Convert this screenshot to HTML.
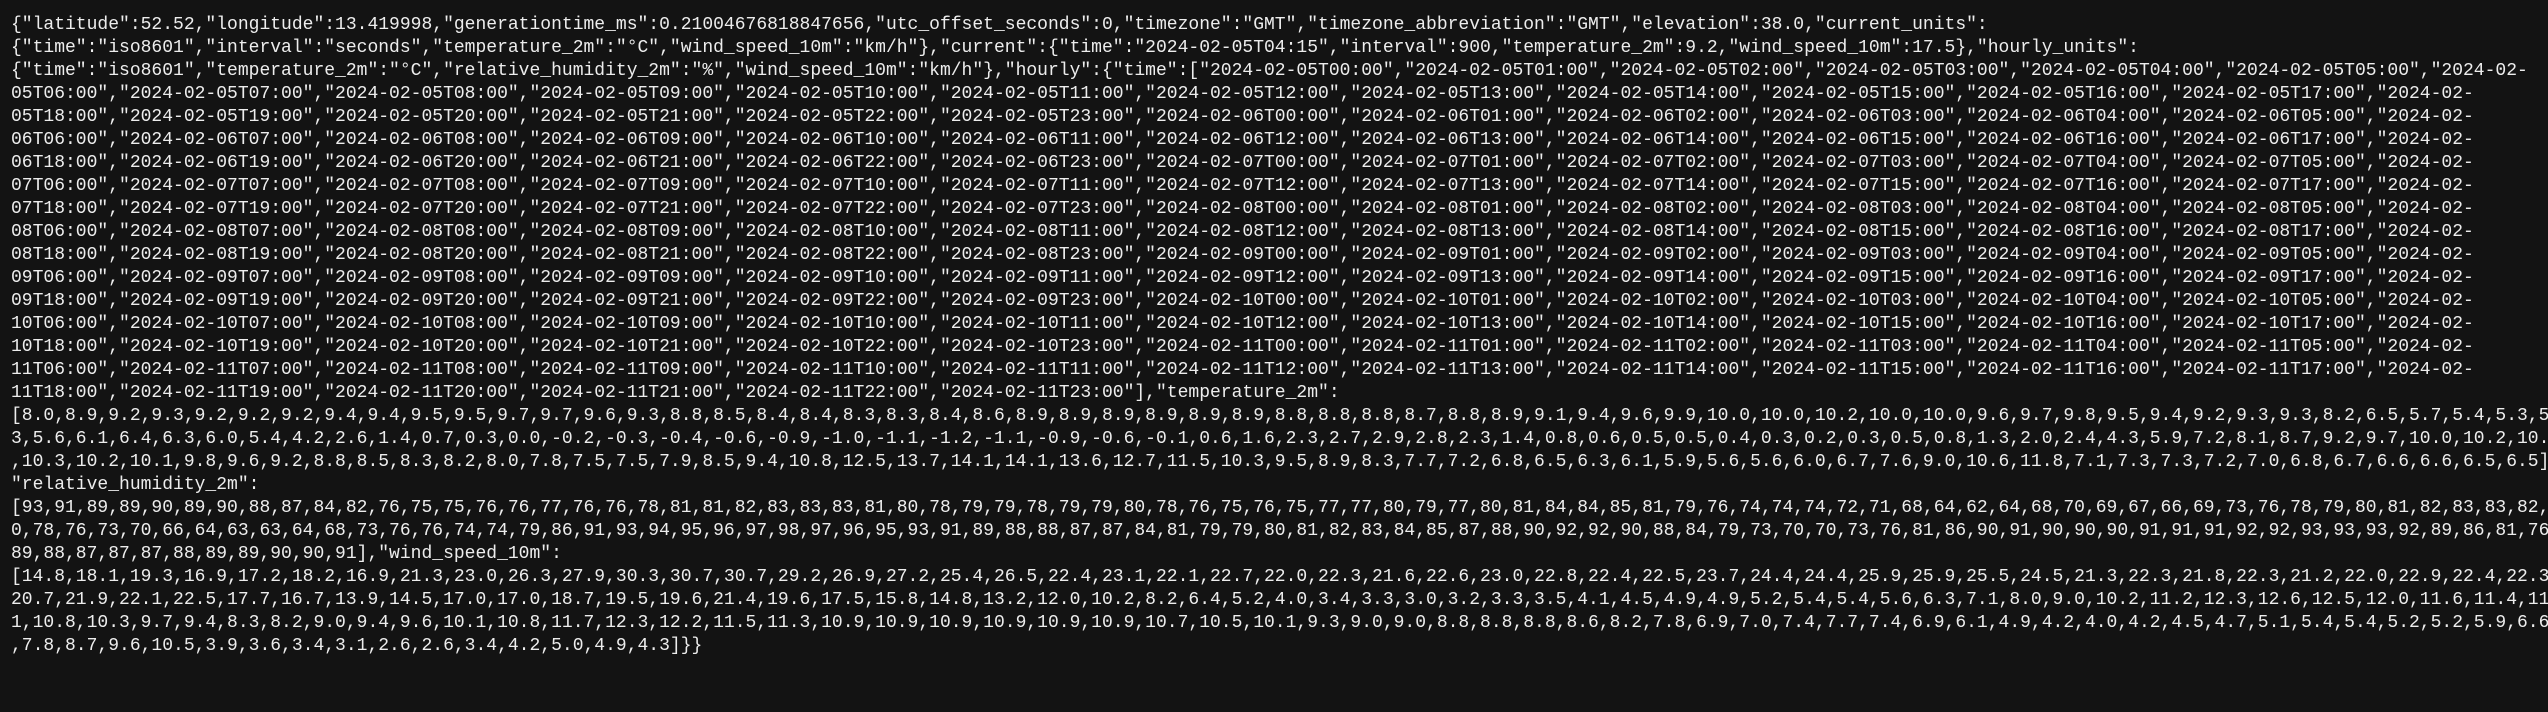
<!DOCTYPE html>
<html><head><meta charset="utf-8"><style>
html,body{margin:0;padding:0;background:#131313;width:2548px;height:712px;overflow:hidden}
pre{margin:0;padding:14px 0 0 11px;font-family:"Liberation Mono",monospace;font-size:18px;line-height:23px;color:#ededed;white-space:pre}
</style></head><body><pre>{"latitude":52.52,"longitude":13.419998,"generationtime_ms":0.21004676818847656,"utc_offset_seconds":0,"timezone":"GMT","timezone_abbreviation":"GMT","elevation":38.0,"current_units":
{"time":"iso8601","interval":"seconds","temperature_2m":"°C","wind_speed_10m":"km/h"},"current":{"time":"2024-02-05T04:15","interval":900,"temperature_2m":9.2,"wind_speed_10m":17.5},"hourly_units":
{"time":"iso8601","temperature_2m":"°C","relative_humidity_2m":"%","wind_speed_10m":"km/h"},"hourly":{"time":["2024-02-05T00:00","2024-02-05T01:00","2024-02-05T02:00","2024-02-05T03:00","2024-02-05T04:00","2024-02-05T05:00","2024-02-
05T06:00","2024-02-05T07:00","2024-02-05T08:00","2024-02-05T09:00","2024-02-05T10:00","2024-02-05T11:00","2024-02-05T12:00","2024-02-05T13:00","2024-02-05T14:00","2024-02-05T15:00","2024-02-05T16:00","2024-02-05T17:00","2024-02-
05T18:00","2024-02-05T19:00","2024-02-05T20:00","2024-02-05T21:00","2024-02-05T22:00","2024-02-05T23:00","2024-02-06T00:00","2024-02-06T01:00","2024-02-06T02:00","2024-02-06T03:00","2024-02-06T04:00","2024-02-06T05:00","2024-02-
06T06:00","2024-02-06T07:00","2024-02-06T08:00","2024-02-06T09:00","2024-02-06T10:00","2024-02-06T11:00","2024-02-06T12:00","2024-02-06T13:00","2024-02-06T14:00","2024-02-06T15:00","2024-02-06T16:00","2024-02-06T17:00","2024-02-
06T18:00","2024-02-06T19:00","2024-02-06T20:00","2024-02-06T21:00","2024-02-06T22:00","2024-02-06T23:00","2024-02-07T00:00","2024-02-07T01:00","2024-02-07T02:00","2024-02-07T03:00","2024-02-07T04:00","2024-02-07T05:00","2024-02-
07T06:00","2024-02-07T07:00","2024-02-07T08:00","2024-02-07T09:00","2024-02-07T10:00","2024-02-07T11:00","2024-02-07T12:00","2024-02-07T13:00","2024-02-07T14:00","2024-02-07T15:00","2024-02-07T16:00","2024-02-07T17:00","2024-02-
07T18:00","2024-02-07T19:00","2024-02-07T20:00","2024-02-07T21:00","2024-02-07T22:00","2024-02-07T23:00","2024-02-08T00:00","2024-02-08T01:00","2024-02-08T02:00","2024-02-08T03:00","2024-02-08T04:00","2024-02-08T05:00","2024-02-
08T06:00","2024-02-08T07:00","2024-02-08T08:00","2024-02-08T09:00","2024-02-08T10:00","2024-02-08T11:00","2024-02-08T12:00","2024-02-08T13:00","2024-02-08T14:00","2024-02-08T15:00","2024-02-08T16:00","2024-02-08T17:00","2024-02-
08T18:00","2024-02-08T19:00","2024-02-08T20:00","2024-02-08T21:00","2024-02-08T22:00","2024-02-08T23:00","2024-02-09T00:00","2024-02-09T01:00","2024-02-09T02:00","2024-02-09T03:00","2024-02-09T04:00","2024-02-09T05:00","2024-02-
09T06:00","2024-02-09T07:00","2024-02-09T08:00","2024-02-09T09:00","2024-02-09T10:00","2024-02-09T11:00","2024-02-09T12:00","2024-02-09T13:00","2024-02-09T14:00","2024-02-09T15:00","2024-02-09T16:00","2024-02-09T17:00","2024-02-
09T18:00","2024-02-09T19:00","2024-02-09T20:00","2024-02-09T21:00","2024-02-09T22:00","2024-02-09T23:00","2024-02-10T00:00","2024-02-10T01:00","2024-02-10T02:00","2024-02-10T03:00","2024-02-10T04:00","2024-02-10T05:00","2024-02-
10T06:00","2024-02-10T07:00","2024-02-10T08:00","2024-02-10T09:00","2024-02-10T10:00","2024-02-10T11:00","2024-02-10T12:00","2024-02-10T13:00","2024-02-10T14:00","2024-02-10T15:00","2024-02-10T16:00","2024-02-10T17:00","2024-02-
10T18:00","2024-02-10T19:00","2024-02-10T20:00","2024-02-10T21:00","2024-02-10T22:00","2024-02-10T23:00","2024-02-11T00:00","2024-02-11T01:00","2024-02-11T02:00","2024-02-11T03:00","2024-02-11T04:00","2024-02-11T05:00","2024-02-
11T06:00","2024-02-11T07:00","2024-02-11T08:00","2024-02-11T09:00","2024-02-11T10:00","2024-02-11T11:00","2024-02-11T12:00","2024-02-11T13:00","2024-02-11T14:00","2024-02-11T15:00","2024-02-11T16:00","2024-02-11T17:00","2024-02-
11T18:00","2024-02-11T19:00","2024-02-11T20:00","2024-02-11T21:00","2024-02-11T22:00","2024-02-11T23:00"],"temperature_2m":
[8.0,8.9,9.2,9.3,9.2,9.2,9.2,9.4,9.4,9.5,9.5,9.7,9.7,9.6,9.3,8.8,8.5,8.4,8.4,8.3,8.3,8.4,8.6,8.9,8.9,8.9,8.9,8.9,8.9,8.8,8.8,8.8,8.7,8.8,8.9,9.1,9.4,9.6,9.9,10.0,10.0,10.2,10.0,10.0,9.6,9.7,9.8,9.5,9.4,9.2,9.3,9.3,8.2,6.5,5.7,5.4,5.3,5.0,5.0,5.
3,5.6,6.1,6.4,6.3,6.0,5.4,4.2,2.6,1.4,0.7,0.3,0.0,-0.2,-0.3,-0.4,-0.6,-0.9,-1.0,-1.1,-1.2,-1.1,-0.9,-0.6,-0.1,0.6,1.6,2.3,2.7,2.9,2.8,2.3,1.4,0.8,0.6,0.5,0.5,0.4,0.3,0.2,0.3,0.5,0.8,1.3,2.0,2.4,4.3,5.9,7.2,8.1,8.7,9.2,9.7,10.0,10.2,10.3
,10.3,10.2,10.1,9.8,9.6,9.2,8.8,8.5,8.3,8.2,8.0,7.8,7.5,7.5,7.9,8.5,9.4,10.8,12.5,13.7,14.1,14.1,13.6,12.7,11.5,10.3,9.5,8.9,8.3,7.7,7.2,6.8,6.5,6.3,6.1,5.9,5.6,5.6,6.0,6.7,7.6,9.0,10.6,11.8,7.1,7.3,7.3,7.2,7.0,6.8,6.7,6.6,6.6,6.5,6.5],
"relative_humidity_2m":
[93,91,89,89,90,89,90,88,87,84,82,76,75,75,76,76,77,76,76,78,81,81,82,83,83,83,81,80,78,79,79,78,79,79,80,78,76,75,76,75,77,77,80,79,77,80,81,84,84,85,81,79,76,74,74,74,72,71,68,64,62,64,68,70,69,67,66,69,73,76,78,79,80,81,82,83,83,82,8
0,78,76,73,70,66,64,63,63,64,68,73,76,76,74,74,79,86,91,93,94,95,96,97,98,97,96,95,93,91,89,88,88,87,87,84,81,79,79,80,81,82,83,84,85,87,88,90,92,92,90,88,84,79,73,70,70,73,76,81,86,90,91,90,90,90,91,91,91,92,92,93,93,93,92,89,86,81,76,72,
89,88,87,87,87,88,89,89,90,90,91],"wind_speed_10m":
[14.8,18.1,19.3,16.9,17.2,18.2,16.9,21.3,23.0,26.3,27.9,30.3,30.7,30.7,29.2,26.9,27.2,25.4,26.5,22.4,23.1,22.1,22.7,22.0,22.3,21.6,22.6,23.0,22.8,22.4,22.5,23.7,24.4,24.4,25.9,25.9,25.5,24.5,21.3,22.3,21.8,22.3,21.2,22.0,22.9,22.4,22.3,
20.7,21.9,22.1,22.5,17.7,16.7,13.9,14.5,17.0,17.0,18.7,19.5,19.6,21.4,19.6,17.5,15.8,14.8,13.2,12.0,10.2,8.2,6.4,5.2,4.0,3.4,3.3,3.0,3.2,3.3,3.5,4.1,4.5,4.9,4.9,5.2,5.4,5.4,5.6,6.3,7.1,8.0,9.0,10.2,11.2,12.3,12.6,12.5,12.0,11.6,11.4,11.
1,10.8,10.3,9.7,9.4,8.3,8.2,9.0,9.4,9.6,10.1,10.8,11.7,12.3,12.2,11.5,11.3,10.9,10.9,10.9,10.9,10.9,10.9,10.7,10.5,10.1,9.3,9.0,9.0,8.8,8.8,8.8,8.6,8.2,7.8,6.9,7.0,7.4,7.7,7.4,6.9,6.1,4.9,4.2,4.0,4.2,4.5,4.7,5.1,5.4,5.4,5.2,5.2,5.9,6.6
,7.8,8.7,9.6,10.5,3.9,3.6,3.4,3.1,2.6,2.6,3.4,4.2,5.0,4.9,4.3]}}</pre></body></html>
